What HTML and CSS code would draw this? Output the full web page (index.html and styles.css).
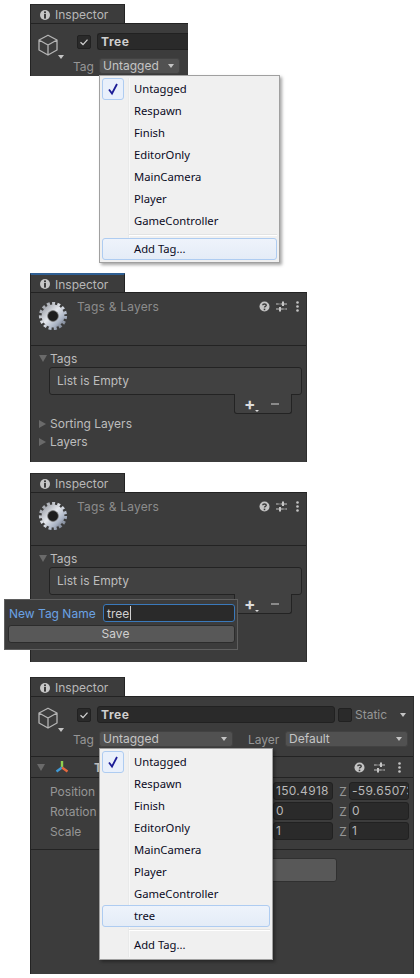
FILE: index.html
```html
<!DOCTYPE HTML>
<html>

<head>
  <title>Inspector tags</title>
  <meta charset="utf-8">
  <link rel="stylesheet" href="styles.css">
</head>

<body>
  <svg class="sprite" width="0" height="0">
    <defs>
      <linearGradient id="steel" x1="0" y1="0" x2="1" y2="1">
        <stop offset="0" stop-color="#8f939b" />
        <stop offset="0.45" stop-color="#e4e7ec" />
        <stop offset="0.75" stop-color="#a9b3c4" />
        <stop offset="1" stop-color="#5f6470" />
      </linearGradient>
      <symbol id="i-info" viewBox="0 0 12 12">
        <circle cx="6" cy="6" r="5" fill="#c6c6c6" />
        <rect x="5" y="2.4" width="2" height="1.8" fill="#3c3c3c" />
        <rect x="5" y="5" width="2" height="4.6" fill="#3c3c3c" />
      </symbol>
      <symbol id="i-cube" viewBox="0 0 20 22">
        <path d="M10 1.2 L19 6 V16 L10 21 L1 16 V6 Z M1 6 L10 11 L19 6 M10 11 V21" fill="none" stroke="#b4b4b4" stroke-width="1.3" stroke-linejoin="round" />
      </symbol>
      <symbol id="i-gear" viewBox="0 0 30 30">
        <circle cx="15" cy="15" r="12.6" fill="none" stroke="url(#steel)" stroke-width="3" stroke-dasharray="3 2.28" />
        <circle cx="15" cy="15" r="11.4" fill="url(#steel)" />
        <circle cx="15" cy="15" r="5.4" fill="#1d1d1d" />
        <circle cx="15" cy="15" r="5.4" fill="none" stroke="#7d7d7d" stroke-width="0.7" />
      </symbol>
      <symbol id="i-help" viewBox="0 0 11 11">
        <circle cx="5.5" cy="5.5" r="5" fill="#c4c4c4" />
        <path d="M3.7 4.3 C3.7 2.5 7.3 2.5 7.3 4.3 C7.3 5.4 5.5 5.3 5.5 6.6" fill="none" stroke="#3c3c3c" stroke-width="1.4" />
        <rect x="4.7" y="7.6" width="1.6" height="1.6" fill="#3c3c3c" />
      </symbol>
      <symbol id="i-sliders" viewBox="0 0 11 11">
        <path d="M0 3 H11 M0 8 H11" stroke="#c4c4c4" stroke-width="1" />
        <path d="M7 0.5 V5 M4 6 V10.5" stroke="#c4c4c4" stroke-width="2" />
        <path d="M2.5 3 H5 M7.5 8 H9.5" stroke="#3c3c3c" stroke-width="1" />
      </symbol>
      <symbol id="i-dots" viewBox="0 0 3 11">
        <circle cx="1.5" cy="1.5" r="1.3" fill="#c4c4c4" />
        <circle cx="1.5" cy="5.5" r="1.3" fill="#c4c4c4" />
        <circle cx="1.5" cy="9.5" r="1.3" fill="#c4c4c4" />
      </symbol>
      <symbol id="i-axes" viewBox="0 0 14 14">
        <path d="M7 7 V1" stroke="#8fd14f" stroke-width="2.4" />
        <path d="M7 7.5 L1.5 11.5" stroke="#3f9bd8" stroke-width="2.4" />
        <path d="M7 7.5 L12.5 11.5" stroke="#e5683f" stroke-width="2.4" />
      </symbol>
    </defs>
  </svg>

  <!-- step 1: tag menu on the new object -->
  <div class="panel panel-first">
    <div class="tabbar">
      <div class="tab"><svg class="tab-icon"><use href="#i-info" /></svg>Inspector</div>
      <div class="tabrest"></div>
    </div>
    <div class="panel-body">
      <div class="go-head">
        <div class="go-icon">
          <svg class="cube"><use href="#i-cube" /></svg>
          <span class="tri-down tri-icon"></span>
        </div>
        <div class="go-fields">
          <div class="go-row go-row-name">
            <span class="check"><svg width="14" height="14" viewBox="0 0 14 14"><path d="M3.5 7.3 L6 9.6 L10.5 4.6" fill="none" stroke="#d0d0d0" stroke-width="1.3" /></svg></span>
            <span class="name-field name-cut">Tree</span>
          </div>
          <div class="go-row">
            <span class="tag-label">Tag</span>
            <span class="dd dd-short">Untagged<span class="tri-down"></span></span>
          </div>
        </div>
      </div>
    </div>
    <ul class="menu menu-wide">
      <li class="menu-item"><span class="tick"><svg width="22" height="22" viewBox="0 0 22 22"><path d="M7 11.5 L10 15.5 L15 6" fill="none" stroke="#1c1c96" stroke-width="1.8" /></svg></span>Untagged</li>
      <li class="menu-item">Respawn</li>
      <li class="menu-item">Finish</li>
      <li class="menu-item">EditorOnly</li>
      <li class="menu-item">MainCamera</li>
      <li class="menu-item">Player</li>
      <li class="menu-item">GameController</li>
      <li class="menu-sep"></li>
      <li class="menu-item menu-hot">Add Tag...</li>
    </ul>
  </div>

  <!-- step 2: tags and layers -->
  <div class="panel panel-tags panel-second">
    <div class="tabbar">
      <div class="tab tab-focus"><svg class="tab-icon"><use href="#i-info" /></svg>Inspector</div>
      <div class="tabrest"></div>
    </div>
    <div class="panel-body">
      <div class="tl-head">
        <svg class="gear"><use href="#i-gear" /></svg>
        <span class="tl-title">Tags &amp; Layers</span>
        <span class="tool-icons">
          <svg class="tool"><use href="#i-help" /></svg>
          <svg class="tool"><use href="#i-sliders" /></svg>
          <svg class="tool-dots"><use href="#i-dots" /></svg>
        </span>
      </div>
      <div class="tl-content">
        <div class="fold"><span class="tri-fold-open"></span>Tags</div>
        <div class="list-box">List is Empty</div>
        <div class="list-foot">
          <span class="plus">+<span class="plus-arrow"></span></span>
          <span class="minus"></span>
        </div>
        <div class="fold fold-first"><span class="tri-fold"></span>Sorting Layers</div>
        <div class="fold fold-next"><span class="tri-fold"></span>Layers</div>
      </div>
    </div>
  </div>

  <!-- step 3: new tag popup -->
  <div class="panel panel-tags panel-third">
    <div class="tabbar">
      <div class="tab"><svg class="tab-icon"><use href="#i-info" /></svg>Inspector</div>
      <div class="tabrest"></div>
    </div>
    <div class="panel-body">
      <div class="tl-head">
        <svg class="gear"><use href="#i-gear" /></svg>
        <span class="tl-title">Tags &amp; Layers</span>
        <span class="tool-icons">
          <svg class="tool"><use href="#i-help" /></svg>
          <svg class="tool"><use href="#i-sliders" /></svg>
          <svg class="tool-dots"><use href="#i-dots" /></svg>
        </span>
      </div>
      <div class="tl-content">
        <div class="fold"><span class="tri-fold-open"></span>Tags</div>
        <div class="list-box">List is Empty</div>
        <div class="list-foot">
          <span class="plus">+<span class="plus-arrow"></span></span>
          <span class="minus"></span>
        </div>
      </div>
    </div>
    <div class="popup">
      <div class="popup-row">
        <span class="popup-label">New Tag Name</span>
        <span class="popup-input">tree<span class="caret"></span></span>
      </div>
      <div class="popup-save">Save</div>
    </div>
  </div>

  <!-- step 4: tag menu with the new tag -->
  <div class="panel panel-last">
    <div class="tabbar">
      <div class="tab"><svg class="tab-icon"><use href="#i-info" /></svg>Inspector</div>
      <div class="tabrest"></div>
    </div>
    <div class="panel-body">
      <div class="go-head go-head-line">
        <div class="go-icon">
          <svg class="cube"><use href="#i-cube" /></svg>
          <span class="tri-down tri-icon"></span>
        </div>
        <div class="go-fields">
          <div class="go-row go-row-name">
            <span class="check"><svg width="14" height="14" viewBox="0 0 14 14"><path d="M3.5 7.3 L6 9.6 L10.5 4.6" fill="none" stroke="#d0d0d0" stroke-width="1.3" /></svg></span>
            <span class="name-field">Tree</span>
            <span class="check check-static"></span>
            <span class="static-label">Static</span>
            <span class="tri-down tri-static"></span>
          </div>
          <div class="go-row">
            <span class="tag-label">Tag</span>
            <span class="dd dd-tag">Untagged<span class="tri-down"></span></span>
            <span class="layer-label">Layer</span>
            <span class="dd dd-layer">Default<span class="tri-down"></span></span>
          </div>
        </div>
      </div>

      <div class="comp-head">
        <span class="tri-fold-open"></span>
        <svg class="axes"><use href="#i-axes" /></svg>
        <span class="comp-title">Transform</span>
        <span class="tool-icons">
          <svg class="tool"><use href="#i-help" /></svg>
          <svg class="tool"><use href="#i-sliders" /></svg>
          <svg class="tool-dots"><use href="#i-dots" /></svg>
        </span>
      </div>
      <div class="comp-body">
        <div class="vec-row">
          <span class="vec-label">Position</span>
          <span class="axis"></span><span class="vec-field"></span>
          <span class="axis"></span><span class="vec-field">150.4918</span>
          <span class="axis">Z</span><span class="vec-field">-59.65073</span>
        </div>
        <div class="vec-row">
          <span class="vec-label">Rotation</span>
          <span class="axis"></span><span class="vec-field"></span>
          <span class="axis"></span><span class="vec-field">0</span>
          <span class="axis">Z</span><span class="vec-field">0</span>
        </div>
        <div class="vec-row">
          <span class="vec-label">Scale</span>
          <span class="axis"></span><span class="vec-field"></span>
          <span class="axis"></span><span class="vec-field">1</span>
          <span class="axis">Z</span><span class="vec-field">1</span>
        </div>
      </div>
      <div class="add-comp"><span class="add-btn"></span></div>
    </div>
    <ul class="menu menu-narrow">
      <li class="menu-item"><span class="tick"><svg width="22" height="22" viewBox="0 0 22 22"><path d="M7 11.5 L10 15.5 L15 6" fill="none" stroke="#1c1c96" stroke-width="1.8" /></svg></span>Untagged</li>
      <li class="menu-item">Respawn</li>
      <li class="menu-item">Finish</li>
      <li class="menu-item">EditorOnly</li>
      <li class="menu-item">MainCamera</li>
      <li class="menu-item">Player</li>
      <li class="menu-item">GameController</li>
      <li class="menu-item menu-hot">tree</li>
      <li class="menu-sep"></li>
      <li class="menu-item">Add Tag...</li>
    </ul>
  </div>
</body>

</html>
```

FILE: styles.css
```css
* {
  box-sizing: border-box;
}

body {
  margin: 0px;
  padding: 4px 0px 0px 30px;
  background-color: #ffffff;
  font-family: Inter, "Liberation Sans", sans-serif;
  font-size: 12px;
  color: #bdbdbd;
}

.sprite {
  display: block;
}

.panel {
  position: relative;
  display: flex;
  flex-direction: column;
}

.panel-first {
  width: 158px;
  height: 72px;
}

.panel-tags {
  width: 277px;
  height: 189px;
}

.panel-second {
  margin-top: 197px;
}

.panel-third {
  margin-top: 11px;
}

.panel-last {
  width: 384px;
  height: 297px;
  margin-top: 15px;
}

/* tab strip */
.tabbar {
  display: flex;
  height: 19px;
  flex: none;
}

.tab {
  display: flex;
  align-items: center;
  width: 95px;
  padding: 1px 0px 0px 8px;
  background-color: #3c3c3c;
  border-top: 1px solid #2a2a2a;
  border-left: 1px solid #232323;
  border-right: 1px solid #232323;
  color: #b8b8b8;
}

.tab-focus {
  border-top: 2px solid #2f5f93;
}

.tab-icon {
  width: 12px;
  height: 12px;
  margin-right: 4px;
}

.tabrest {
  flex: 1;
}

.panel-body {
  flex: 1;
  display: flex;
  flex-direction: column;
  background-color: #3c3c3c;
  border-top: 1px solid #232323;
  border-left: 1px solid #232323;
  border-right: 1px solid #2e2e2e;
}

.panel-first .panel-body {
  border-right: 0px;
}

/* game object header */
.go-head {
  display: flex;
  padding: 9px 5px 2px 7px;
}

.go-head-line {
  padding-bottom: 9px;
  border-bottom: 1px solid #232323;
}

.panel-first .go-head {
  padding-right: 0px;
}

.go-icon {
  position: relative;
  width: 35px;
  flex: none;
}

.cube {
  width: 20px;
  height: 22px;
  margin-top: 1px;
  display: block;
}

.tri-down {
  display: inline-block;
  width: 0px;
  height: 0px;
  border-left: 3.5px solid transparent;
  border-right: 3.5px solid transparent;
  border-top: 4px solid #c4c4c4;
}

.tri-icon {
  position: absolute;
  left: 20px;
  top: 22px;
}

.go-fields {
  flex: 1;
  min-width: 0;
  display: flex;
  flex-direction: column;
  gap: 8px;
}

.go-row {
  display: flex;
  align-items: center;
}

.go-row-name {
  height: 17px;
  padding-left: 4px;
}

.check {
  width: 14px;
  height: 14px;
  flex: none;
  margin-right: 6px;
  background-color: #2a2a2a;
  border: 1px solid #212121;
  border-radius: 2px;
  display: flex;
  align-items: center;
  justify-content: center;
}

.check svg {
  flex: none;
}

.check-static {
  margin-left: 3px;
  margin-right: 3px;
}

.name-field {
  flex: 1;
  height: 17px;
  padding-left: 3px;
  background-color: #2a2a2a;
  border: 1px solid #212121;
  border-radius: 3px;
  font-weight: bold;
  letter-spacing: 0.6px;
  line-height: 15px;
  color: #cfcfcf;
}

.name-cut {
  border-radius: 3px 0px 0px 3px;
  border-right: 0px;
}

.static-label {
  width: 45px;
  flex: none;
  color: #969696;
}

.tri-static {
  margin-right: 2px;
}

.tag-label {
  width: 26px;
  flex: none;
  color: #969696;
}

.layer-label {
  width: 37px;
  flex: none;
  margin-left: 15px;
  color: #969696;
}

.dd {
  display: flex;
  align-items: center;
  justify-content: space-between;
  height: 16px;
  padding: 0px 5px 1px 3px;
  background-color: #515151;
  border: 1px solid #424242;
  border-radius: 3px;
  color: #c4c4c4;
}

.dd-short {
  width: 81px;
}

.dd-tag {
  width: 134px;
}

.dd-layer {
  flex: 1;
}

/* windows style popup menu */
.menu {
  position: absolute;
  margin: 0px;
  padding: 2px 2px;
  list-style: none;
  background-color: #f0f0f0;
  border: 1px solid #a0a0a0;
  box-shadow: 2px 2px 3px rgba(0, 0, 0, 0.35);
  font-family: "Noto Sans", "Open Sans", sans-serif;
  font-size: 11.25px;
  color: #0a0a1e;
}

.menu-wide {
  left: 69px;
  top: 71px;
  width: 181px;
  height: 188px;
}

.menu-narrow {
  left: 69px;
  top: 71px;
  width: 174px;
  height: 212px;
}

.menu::before {
  content: "";
  position: absolute;
  left: 28px;
  top: 2px;
  bottom: 2px;
  width: 2px;
  background-image: linear-gradient(90deg, #e2e3e3, #ffffff);
}

.menu-item {
  position: relative;
  display: flex;
  align-items: center;
  height: 22px;
  padding: 0px 0px 1px 31px;
  border: 1px solid transparent;
  border-radius: 3px;
}

.menu-hot {
  background-image: linear-gradient(#eef3fb, #e4ecf7);
  border-color: #aeccf1;
}

.menu-sep {
  position: relative;
  height: 2px;
  margin: 2px 0px 2px 27px;
  background-color: #e2e3e3;
  border-bottom: 1px solid #ffffff;
}

.menu-narrow .menu-sep {
  margin-bottom: 3px;
}

.tick {
  position: absolute;
  left: -1px;
  top: -1px;
  width: 22px;
  height: 22px;
  background-color: #e9f0fb;
  border: 1px solid #aeccf1;
  border-radius: 3px;
}

.tick svg {
  display: block;
  margin: -1px;
}

/* tags and layers */
.tl-head {
  display: flex;
  align-items: flex-start;
  height: 53px;
  padding: 8px 7px 0px 7px;
  border-bottom: 1px solid #232323;
}

.gear {
  width: 30px;
  height: 30px;
  flex: none;
}

.tl-title {
  margin: -1px 0px 0px 9px;
  line-height: 14px;
  color: #8c8c8c;
  letter-spacing: 0.2px;
}

.tool-icons {
  display: flex;
  align-items: center;
  gap: 6px;
  margin-left: auto;
}

.tool {
  width: 11px;
  height: 11px;
}

.tool-dots {
  width: 3px;
  height: 11px;
  margin-left: 3px;
}

.tl-content {
  display: flex;
  flex-direction: column;
  padding: 4px 4px 0px 8px;
}

.fold {
  display: flex;
  align-items: center;
  height: 17px;
  color: #bdbdbd;
}

.fold-first {
  margin-top: 1px;
}

.fold-next {
  margin-top: 1px;
}

.tri-fold-open {
  width: 0px;
  height: 0px;
  margin-right: 3px;
  border-left: 4px solid transparent;
  border-right: 4px solid transparent;
  border-top: 7px solid #6a6a6a;
}

.tri-fold {
  width: 0px;
  height: 0px;
  margin-right: 4px;
  border-top: 4px solid transparent;
  border-bottom: 4px solid transparent;
  border-left: 7px solid #6a6a6a;
}

.list-box {
  height: 28px;
  margin-left: 10px;
  padding-left: 7px;
  background-color: #414141;
  border: 1px solid #232323;
  border-radius: 3px;
  line-height: 26px;
  color: #bdbdbd;
}

.list-foot {
  position: relative;
  display: flex;
  align-items: center;
  justify-content: space-between;
  align-self: flex-end;
  width: 58px;
  height: 20px;
  margin: -1px 10px 0px 0px;
  padding: 1px 12px 0px 9px;
  background-color: #414141;
  border: 1px solid #232323;
  border-top: 0px;
  border-radius: 0px 0px 3px 3px;
}

.plus {
  position: relative;
  font-size: 17px;
  font-weight: bold;
  line-height: 17px;
  color: #dcdcdc;
}

.plus-arrow {
  position: absolute;
  right: -3px;
  bottom: 1px;
  width: 0px;
  height: 0px;
  border-left: 2px solid transparent;
  border-right: 2px solid transparent;
  border-top: 2px solid #dcdcdc;
}

.minus {
  width: 8px;
  height: 2px;
  background-color: #8a8a8a;
}

/* new tag popup */
.popup {
  position: absolute;
  left: -26px;
  top: 126px;
  width: 234px;
  height: 51px;
  padding: 4px 2px 0px 3px;
  background-color: #3c3c3c;
  border: 1px solid #5f5f5f;
}

.popup-row {
  display: flex;
  align-items: center;
  justify-content: space-between;
  padding-left: 1px;
}

.popup-label {
  color: #6aa2e4;
}

.popup-input {
  display: flex;
  align-items: center;
  width: 132px;
  height: 18px;
  padding-left: 3px;
  background-color: #2a2a2a;
  border: 1px solid #3a79bb;
  border-radius: 3px;
  color: #d0d0d0;
}

.caret {
  width: 1px;
  height: 14px;
  margin-left: 1px;
  background-color: #d0d0d0;
}

.popup-save {
  height: 18px;
  margin-top: 3px;
  padding-right: 12px;
  background-color: #585858;
  border: 1px solid #2c2c2c;
  border-radius: 3px;
  text-align: center;
  line-height: 16px;
  color: #d0d0d0;
}

/* transform component */
.comp-head {
  display: flex;
  align-items: center;
  height: 21px;
  padding: 0px 12px 0px 6px;
  border-bottom: 1px solid #232323;
}

.axes {
  width: 14px;
  height: 14px;
  margin: 0px 25px 0px 7px;
}

.comp-title {
  font-weight: bold;
  color: #bdbdbd;
}

.comp-head .tool-icons {
  gap: 9px;
}

.comp-head .tool-dots {
  margin-left: 4px;
}

.comp-body {
  display: flex;
  flex-direction: column;
  gap: 2px;
  height: 72px;
  padding-top: 4px;
  border-bottom: 1px solid #232323;
}

.vec-row {
  display: flex;
  align-items: center;
  height: 18px;
  padding-left: 19px;
}

.vec-label {
  width: 131px;
  flex: none;
  color: #969696;
}

.axis {
  width: 12px;
  flex: none;
  text-align: center;
  margin-left: 4px;
  color: #969696;
}

.vec-field {
  width: 60px;
  height: 18px;
  flex: none;
  overflow: hidden;
  padding: 0px 0px 0px 2px;
  background-color: #2a2a2a;
  border: 1px solid #212121;
  border-radius: 3px;
  line-height: 16px;
  letter-spacing: 0.3px;
  color: #b8b8b8;
}

.add-comp {
  display: flex;
  justify-content: flex-end;
  padding: 8px 76px 0px 0px;
}

.add-btn {
  width: 200px;
  height: 24px;
  background-color: #585858;
  border: 1px solid #303030;
  border-radius: 3px;
}
```
